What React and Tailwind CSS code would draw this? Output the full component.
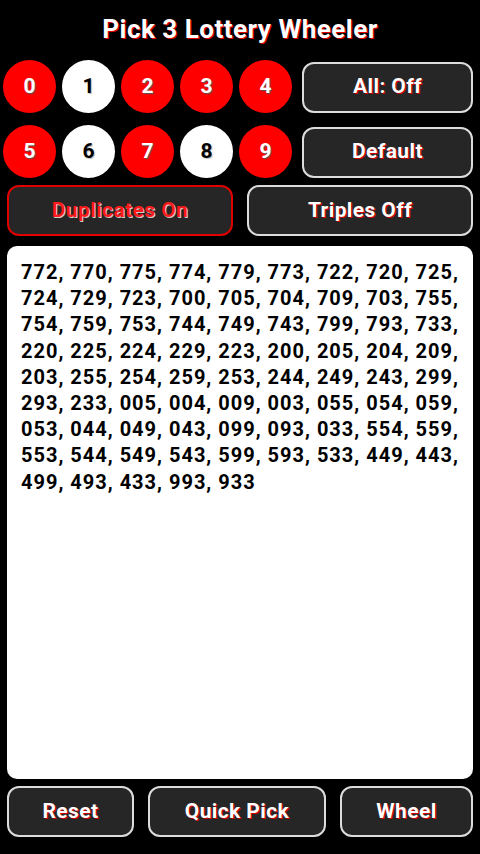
import React from 'react';

const row1 = [
  { n: 0, on: true },
  { n: 1, on: false },
  { n: 2, on: true },
  { n: 3, on: true },
  { n: 4, on: true },
];
const row2 = [
  { n: 5, on: true },
  { n: 6, on: false },
  { n: 7, on: true },
  { n: 8, on: false },
  { n: 9, on: true },
];

const combos =
  '772, 770, 775, 774, 779, 773, 722, 720, 725, 724, 729, 723, 700, 705, 704, 709, 703, 755, 754, 759, 753, 744, 749, 743, 799, 793, 733, 220, 225, 224, 229, 223, 200, 205, 204, 209, 203, 255, 254, 259, 253, 244, 249, 243, 299, 293, 233, 005, 004, 009, 003, 055, 054, 059, 053, 044, 049, 043, 099, 093, 033, 554, 559, 553, 544, 549, 543, 599, 593, 533, 449, 443, 499, 493, 433, 993, 933';

const Ball = ({ n, on }) => (
  <div
    className={`w-[53px] h-[53px] rounded-full flex items-center justify-center text-[21px] font-bold ${
      on
        ? 'bg-[#ff0000] text-white [text-shadow:1px_1px_1px_#555]'
        : 'bg-white text-black [text-shadow:1px_1px_1px_#bbb]'
    }`}
  >
    {n}
  </div>
);

const Btn = ({ label, className = '', red = false }) => (
  <button
    className={`h-[51px] rounded-[12px] bg-[#262626] border-2 flex items-center justify-center text-[21px] tracking-[0.4px] font-bold ${
      red
        ? 'border-[#e00000] text-[#ff1a1a] [text-shadow:1px_1px_0_#cccccc]'
        : 'border-[#dcdcdc] text-white [text-shadow:1px_1px_0_#d00000]'
    } ${className}`}
  >
    {label}
  </button>
);

export default function App() {
  return (
    <div className="w-[480px] h-[854px] bg-black font-['Roboto',sans-serif] flex flex-col">
      <h1 className="h-[60px] flex items-center justify-center text-[26px] tracking-[0.5px] font-bold text-white [text-shadow:1px_1px_0_#e00000] pb-[1px]">
        Pick 3 Lottery Wheeler
      </h1>

      <div className="flex items-center pl-[3px]">
        <div className="flex gap-[6px]">
          {row1.map((b) => (
            <Ball key={b.n} {...b} />
          ))}
        </div>
        <Btn label="All: Off" className="ml-[10px] w-[171px] mt-[1px]" />
      </div>

      <div className="flex items-center pl-[3px] mt-[12px]">
        <div className="flex gap-[6px]">
          {row2.map((b) => (
            <Ball key={b.n} {...b} />
          ))}
        </div>
        <Btn label="Default" className="ml-[10px] w-[171px] mt-[1px]" />
      </div>

      <div className="flex justify-between px-[7px] mt-[7px]">
        <Btn label="Duplicates On" red className="w-[226px]" />
        <Btn label="Triples Off" className="w-[226px]" />
      </div>

      <div className="mx-[7px] mt-[10px] h-[533px] bg-white rounded-[10px] pl-[14px] pr-[8px] pt-[13px] text-[20px] tracking-[1px] leading-[26.2px] font-bold text-black">
        {combos}
      </div>

      <div className="flex justify-between px-[7px] mt-[7px]">
        <Btn label="Reset" className="w-[127px]" />
        <Btn label="Quick Pick" className="w-[178px]" />
        <Btn label="Wheel" className="w-[133px]" />
      </div>
    </div>
  );
}
